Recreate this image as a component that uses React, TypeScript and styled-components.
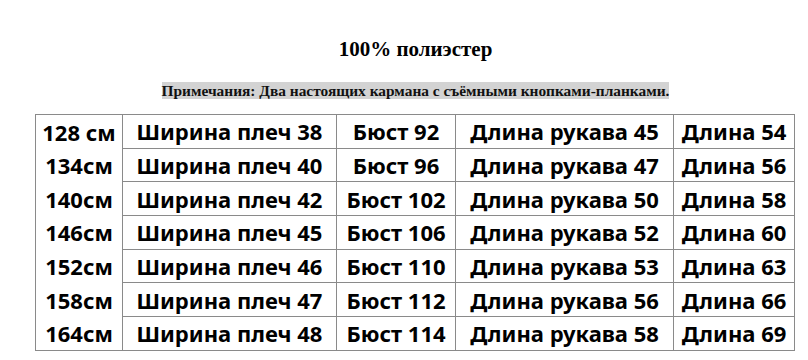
import React from 'react';
import styled, { createGlobalStyle } from 'styled-components';

const GlobalStyle = createGlobalStyle`
    html, body {
        margin: 0;
        padding: 0;
        background: #fff;
    }
`;

const Page = styled.div`
    width: 808px;
    height: 360px;
    box-sizing: border-box;
    padding-left: 23px;
    overflow: hidden;
    display: flex;
    flex-direction: column;
    align-items: center;
    background: #fff;
`;

const Title = styled.h1`
    margin: 37px 0 0;
    font-family: 'Liberation Serif', 'Times New Roman', serif;
    font-weight: 700;
    font-size: 21px;
    line-height: 24px;
    color: #000;
`;

const Note = styled.p`
    margin: 21px 0 0;
    font-family: 'Liberation Serif', 'Times New Roman', serif;
    font-weight: 700;
    font-size: 15.4px;
    line-height: 17px;
    color: #111;
    background: #d3d3d3;
`;

const Table = styled.table`
    margin: 15px 0 0 12px;
    align-self: flex-start;
    border-collapse: collapse;
    table-layout: fixed;
    width: 760px;
    font-family: 'Noto Sans', 'Open Sans', sans-serif;
    font-weight: 700;
    font-size: 22px;
    color: #000;
`;

const Row = styled.tr`
    &:first-child td {
        border-top: 1px solid #8a8a8a;
    }
    &:last-child td {
        border-bottom: 1px solid #8a8a8a;
    }
`;

const Cell = styled.td<{ $first?: boolean }>`
    height: 32.7px;
    padding: 0;
    text-align: center;
    white-space: nowrap;
    border: 1px solid #8a8a8a;
    line-height: 32px;
    ${p => p.$first && 'border-top: none; border-bottom: none;'}
`;

const rows = [
    ['128 см', 38, 92, 45, 54],
    ['134см', 40, 96, 47, 56],
    ['140см', 42, 102, 50, 58],
    ['146см', 45, 106, 52, 60],
    ['152см', 46, 110, 53, 63],
    ['158см', 47, 112, 56, 66],
    ['164см', 48, 114, 58, 69],
];

const widths = [87, 214, 119, 218, 121];

export default function App() {
    return (
        <Page>
            <GlobalStyle />
            <Title>100% полиэстер</Title>
            <Note>Примечания: Два настоящих кармана с съёмными кнопками-планками.</Note>
            <Table>
                <colgroup>
                    {widths.map((w, i) => (
                        <col key={i} style={{ width: w }} />
                    ))}
                </colgroup>
                <tbody>
                    {rows.map(([size, shoulder, bust, sleeve, length], i) => (
                        <Row key={i}>
                            <Cell $first>{size}</Cell>
                            <Cell>Ширина плеч {shoulder}</Cell>
                            <Cell>Бюст {bust}</Cell>
                            <Cell>Длина рукава {sleeve}</Cell>
                            <Cell>Длина {length}</Cell>
                        </Row>
                    ))}
                </tbody>
            </Table>
        </Page>
    );
}
